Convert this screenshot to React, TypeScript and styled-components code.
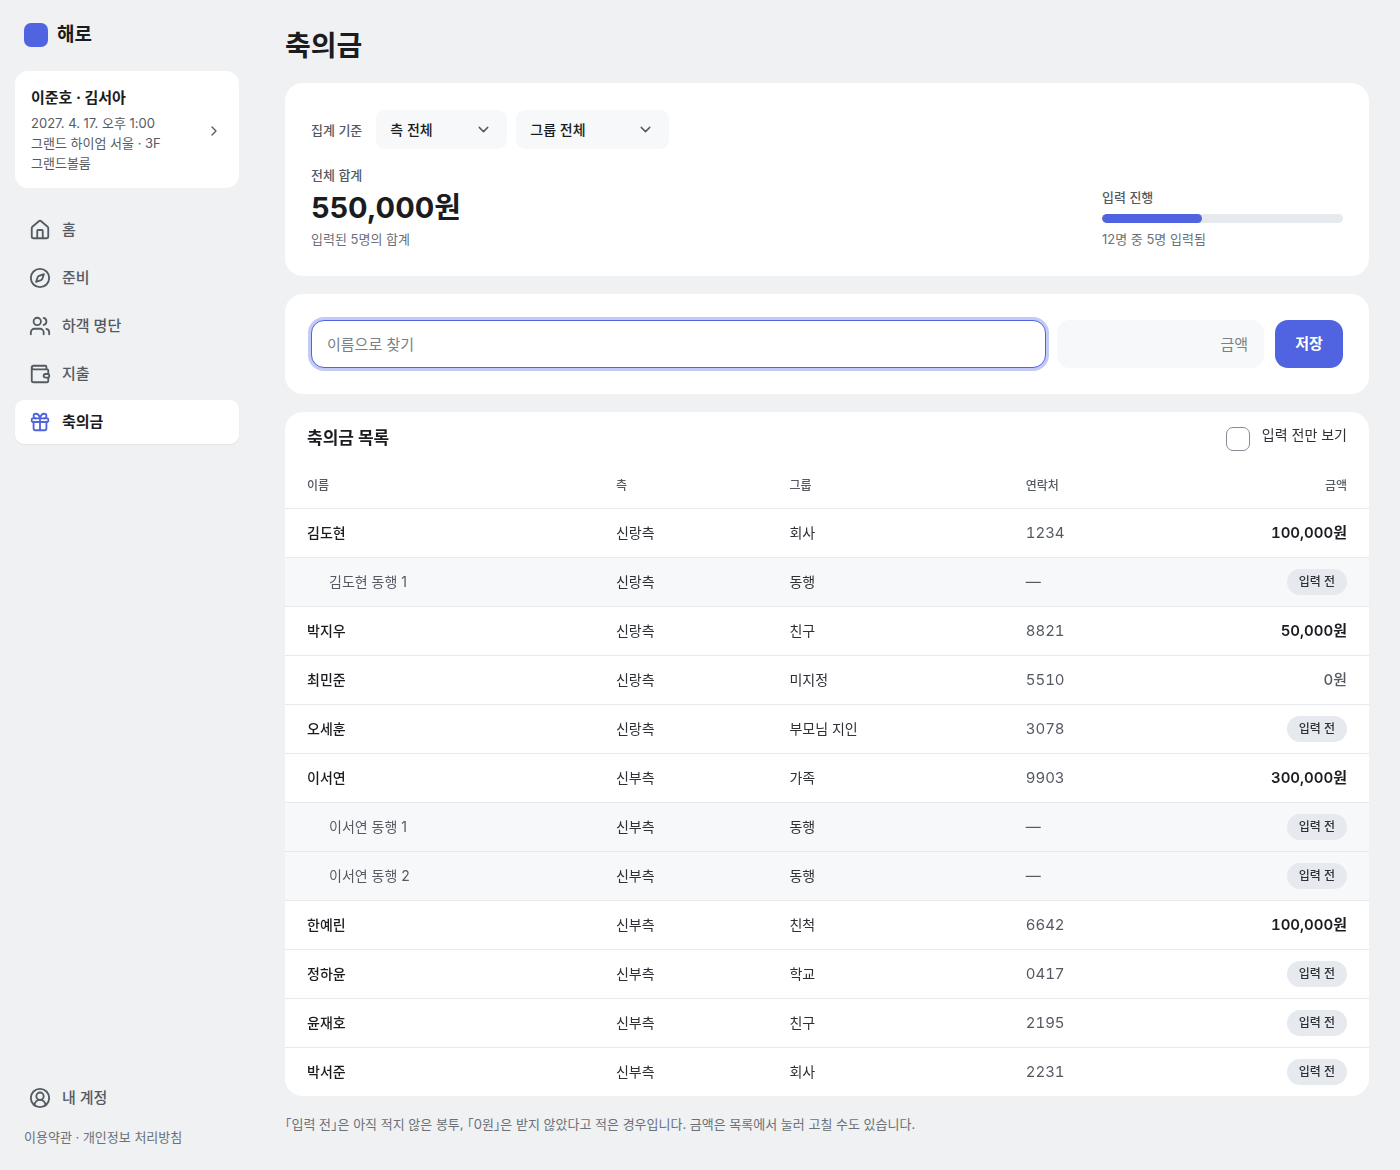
import React, { useState } from "react";
import styled, { createGlobalStyle, css } from "styled-components";
import {
  ChevronDown,
  ChevronRight,
  CircleUserRound,
  Compass,
  Gift,
  House,
  Users,
  Wallet,
} from "lucide-react";

const color = {
  page: "#eff1f3",
  card: "#ffffff",
  soft: "#f7f8fa",
  line: "#e7e9ec",
  chip: "#e6e9ed",
  ink: "#1a1c20",
  body: "#2d3136",
  mid: "#555a62",
  muted: "#6b7078",
  brand: "#5063e0",
};

const GlobalStyle = createGlobalStyle`
  *, *::before, *::after { box-sizing: border-box; }
  body {
    margin: 0;
    background: ${color.page};
    color: ${color.ink};
    font-family: Inter, "Noto Sans CJK KR", sans-serif;
    font-size: 15px;
    line-height: 20px;
    word-break: keep-all;
    -webkit-font-smoothing: antialiased;
  }
  button, input, select { font: inherit; color: inherit; }
  h1, h2, p { margin: 0; }
  a { color: inherit; text-decoration: none; }
`;

const Shell = styled.div`
  display: grid;
  grid-template-columns: 254px minmax(0, 1fr);
  min-height: 100vh;
`;

const Sidebar = styled.aside`
  position: sticky;
  top: 0;
  display: flex;
  flex-direction: column;
  height: 100vh;
  padding: 20px 15px 23px;
`;

const Brand = styled.a`
  display: flex;
  align-items: center;
  gap: 9px;
  height: 30px;
  padding: 0 9px;
  font-size: 19px;
  font-weight: 700;
`;

const BrandMark = styled.span`
  width: 24px;
  height: 24px;
  border-radius: 7px;
  background: ${color.brand};
`;

const EventCard = styled.button`
  display: flex;
  align-items: center;
  justify-content: space-between;
  margin-top: 21px;
  padding: 17px 17px 15px 16px;
  border: 0;
  border-radius: 13px;
  background: ${color.card};
  text-align: left;
  cursor: pointer;

  svg { color: ${color.mid}; }
`;

const EventText = styled.span`
  display: flex;
  flex-direction: column;
  width: 150px;
  font-size: 13px;
  color: ${color.mid};
`;

const Couple = styled.strong`
  margin-bottom: 5px;
  font-size: 15px;
  font-weight: 700;
  color: ${color.ink};
`;

const Nav = styled.nav`
  display: flex;
  flex-direction: column;
  gap: 4px;
  margin-top: 20px;
`;

const NavLink = styled.a<{ $active?: boolean }>`
  display: flex;
  align-items: center;
  gap: 11px;
  height: 44px;
  padding: 0 14px;
  border-radius: 9px;
  font-size: 15px;
  font-weight: 500;
  color: ${color.mid};

  svg { flex: none; }

  ${(p) =>
    p.$active &&
    css`
      background: ${color.card};
      box-shadow: 0 1px 2px rgba(20, 24, 40, 0.06);
      font-weight: 700;
      color: ${color.ink};
      svg { color: ${color.brand}; }
    `}
`;

const SidebarFoot = styled.div`
  display: flex;
  flex-direction: column;
  gap: 7px;
  margin-top: auto;
`;

const Legal = styled.p`
  padding: 0 9px;
  font-size: 13px;
  color: ${color.muted};
`;

const Main = styled.main`
  display: flex;
  flex-direction: column;
  gap: 18px;
  padding: 28px 31px 35px 31px;
`;

const PageTitle = styled.h1`
  font-size: 28px;
  line-height: 37px;
  font-weight: 700;
`;

const Card = styled.section`
  border-radius: 18px;
  background: ${color.card};
`;

const SummaryCard = styled(Card)`
  padding: 27px 26px;
`;

const Filters = styled.div`
  display: flex;
  align-items: center;
  gap: 9px;
`;

const FilterLabel = styled.span`
  margin-right: 5px;
  font-size: 13px;
  font-weight: 500;
  color: ${color.mid};
`;

const SelectBox = styled.span<{ $width: number }>`
  display: grid;
  align-items: center;
  width: ${(p) => p.$width}px;

  > * { grid-area: 1 / 1; }
  svg {
    justify-self: end;
    margin-right: 15px;
    color: ${color.mid};
    pointer-events: none;
  }
`;

const Select = styled.select`
  appearance: none;
  width: 100%;
  height: 39px;
  padding: 0 32px 0 14px;
  border: 0;
  border-radius: 9px;
  background: ${color.soft};
  font-size: 14px;
  font-weight: 500;
  color: ${color.ink};
`;

const Totals = styled.div`
  display: flex;
  align-items: flex-end;
  justify-content: space-between;
  margin-top: 16px;
`;

const SmallLabel = styled.p`
  font-size: 13px;
  font-weight: 500;
  color: ${color.mid};
`;

const SmallNote = styled.p`
  font-size: 13px;
  color: ${color.muted};
`;

const Amount = styled.p`
  margin: 3px 0 1px;
  font-size: 29px;
  line-height: 40px;
  font-weight: 700;
`;

const ProgressBlock = styled.div`
  width: 241px;
`;

const Track = styled.div`
  height: 9px;
  margin: 7px 0 6px;
  border-radius: 5px;
  background: ${color.chip};
  overflow: hidden;
`;

const Fill = styled.div`
  height: 100%;
  border-radius: 5px;
  background: ${color.brand};
`;

const EntryCard = styled(Card)`
  padding: 26px;
`;

const EntryForm = styled.form`
  display: flex;
  gap: 11px;
`;

const Field = styled.input`
  height: 48px;
  min-width: 0;
  padding: 0 15px;
  border: 1px solid transparent;
  border-radius: 13px;
  outline: 0;
  background: ${color.soft};
  font-size: 15px;

  &::placeholder { color: #7b7f87; opacity: 1; }
  &:focus {
    border-color: ${color.brand};
    background: ${color.card};
    box-shadow: 0 0 0 3px #c3caf6;
  }
`;

const NameField = styled(Field)`
  flex: 1;
`;

const MoneyField = styled(Field)`
  width: 207px;
  text-align: right;
`;

const SaveButton = styled.button`
  width: 68px;
  height: 48px;
  border: 0;
  border-radius: 13px;
  background: ${color.brand};
  font-size: 15px;
  font-weight: 700;
  color: #ffffff;
  cursor: pointer;
`;

const ListCard = styled(Card)`
  overflow: hidden;
`;

const ListHead = styled.div`
  display: flex;
  align-items: center;
  justify-content: space-between;
  height: 52px;
  padding: 0 22px;
`;

const ListTitle = styled.h2`
  font-size: 17px;
  line-height: 24px;
  font-weight: 700;
`;

const CheckLabel = styled.label`
  display: flex;
  align-items: flex-end;
  gap: 12px;
  font-size: 14px;
  color: ${color.body};

  span { padding-bottom: 6px; }
`;

const Checkbox = styled.input`
  appearance: none;
  width: 24px;
  height: 24px;
  margin: 0;
  border: 1px solid #868b94;
  border-radius: 7px;
  background: ${color.card};

  &:checked {
    border-color: ${color.brand};
    background: ${color.brand};
  }
`;

const Table = styled.table`
  width: 100%;
  table-layout: fixed;
  border-collapse: separate;
  border-spacing: 0;
`;

const Col = styled.col<{ $share: number }>`
  width: ${(p) => p.$share}%;
`;

const HeadCell = styled.th<{ $end?: boolean }>`
  height: 44px;
  padding: ${(p) => (p.$end ? "0 22px 0 0" : "0 0 0 22px")};
  font-size: 12px;
  font-weight: 500;
  color: ${color.mid};
  text-align: ${(p) => (p.$end ? "right" : "left")};
`;

const Row = styled.tr<{ $sub: boolean }>`
  background: ${(p) => (p.$sub ? color.soft : color.card)};
`;

const Cell = styled.td`
  height: 49px;
  padding: 0 0 0 22px;
  border-top: 1px solid ${color.line};
  font-size: 14px;
  color: ${color.body};
`;

const NameCell = styled(Cell)<{ $sub: boolean }>`
  padding-left: ${(p) => (p.$sub ? 44 : 22)}px;
  font-weight: ${(p) => (p.$sub ? 400 : 500)};
  color: ${(p) => (p.$sub ? color.mid : color.ink)};
`;

const PhoneCell = styled(Cell)`
  font-size: 15px;
  font-variant-numeric: tabular-nums;
  color: ${color.mid};
`;

const MoneyCell = styled(Cell)<{ $zero: boolean }>`
  padding: 0 22px 0 0;
  text-align: right;
  font-size: 15px;
  font-weight: ${(p) => (p.$zero ? 500 : 600)};
  font-variant-numeric: tabular-nums;
  color: ${(p) => (p.$zero ? color.mid : color.ink)};
`;

const Pending = styled.span`
  display: inline-block;
  padding: 3px 12px;
  border-radius: 13px;
  background: ${color.chip};
  font-size: 12px;
  font-weight: 500;
  color: ${color.body};
`;

const FootNote = styled.p`
  font-size: 13px;
  font-feature-settings: "halt";
  color: ${color.muted};
`;

const navItems = [
  { label: "홈", icon: House },
  { label: "준비", icon: Compass },
  { label: "하객 명단", icon: Users },
  { label: "지출", icon: Wallet },
  { label: "축의금", icon: Gift, active: true },
];

type Guest = {
  name: string;
  side: string;
  group: string;
  phone: string;
  amount: number | null;
  sub?: boolean;
};

const guests: Guest[] = [
  { name: "김도현", side: "신랑측", group: "회사", phone: "1234", amount: 100000 },
  { name: "김도현 동행 1", side: "신랑측", group: "동행", phone: "—", amount: null, sub: true },
  { name: "박지우", side: "신랑측", group: "친구", phone: "8821", amount: 50000 },
  { name: "최민준", side: "신랑측", group: "미지정", phone: "5510", amount: 0 },
  { name: "오세훈", side: "신랑측", group: "부모님 지인", phone: "3078", amount: null },
  { name: "이서연", side: "신부측", group: "가족", phone: "9903", amount: 300000 },
  { name: "이서연 동행 1", side: "신부측", group: "동행", phone: "—", amount: null, sub: true },
  { name: "이서연 동행 2", side: "신부측", group: "동행", phone: "—", amount: null, sub: true },
  { name: "한예린", side: "신부측", group: "친척", phone: "6642", amount: 100000 },
  { name: "정하윤", side: "신부측", group: "학교", phone: "0417", amount: null },
  { name: "윤재호", side: "신부측", group: "친구", phone: "2195", amount: null },
  { name: "박서준", side: "신부측", group: "회사", phone: "2231", amount: null },
];

const won = (value: number) => `${value.toLocaleString("en-US")}원`;

export default function App() {
  const [pendingOnly, setPendingOnly] = useState(false);
  const entered = guests.filter((g) => g.amount !== null).length;
  const total = guests.reduce((sum, g) => sum + (g.amount ?? 0), 0);
  const rows = pendingOnly ? guests.filter((g) => g.amount === null) : guests;

  return (
    <>
      <GlobalStyle />
      <Shell>
        <Sidebar>
          <Brand href="#">
            <BrandMark />
            해로
          </Brand>
          <EventCard type="button">
            <EventText>
              <Couple>이준호 · 김서아</Couple>
              <span>2027. 4. 17. 오후 1:00</span>
              <span>그랜드 하이엄 서울 · 3F 그랜드볼룸</span>
            </EventText>
            <ChevronRight size={16} />
          </EventCard>
          <Nav>
            {navItems.map(({ label, icon: Icon, active }) => (
              <NavLink key={label} href="#" $active={active}>
                <Icon size={22} />
                {label}
              </NavLink>
            ))}
          </Nav>
          <SidebarFoot>
            <NavLink href="#">
              <CircleUserRound size={22} />내 계정
            </NavLink>
            <Legal>
              <a href="#">이용약관</a> · <a href="#">개인정보 처리방침</a>
            </Legal>
          </SidebarFoot>
        </Sidebar>

        <Main>
          <PageTitle>축의금</PageTitle>

          <SummaryCard>
            <Filters>
              <FilterLabel>집계 기준</FilterLabel>
              <SelectBox $width={131}>
                <Select aria-label="측">
                  <option>측 전체</option>
                </Select>
                <ChevronDown size={17} />
              </SelectBox>
              <SelectBox $width={153}>
                <Select aria-label="그룹">
                  <option>그룹 전체</option>
                </Select>
                <ChevronDown size={17} />
              </SelectBox>
            </Filters>
            <Totals>
              <div>
                <SmallLabel>전체 합계</SmallLabel>
                <Amount>{won(total)}</Amount>
                <SmallNote>{`입력된 ${entered}명의 합계`}</SmallNote>
              </div>
              <ProgressBlock>
                <SmallLabel>입력 진행</SmallLabel>
                <Track>
                  <Fill style={{ width: `${(entered / guests.length) * 100}%` }} />
                </Track>
                <SmallNote>{`${guests.length}명 중 ${entered}명 입력됨`}</SmallNote>
              </ProgressBlock>
            </Totals>
          </SummaryCard>

          <EntryCard>
            <EntryForm onSubmit={(e) => e.preventDefault()}>
              <NameField autoFocus aria-label="이름" placeholder="이름으로 찾기" />
              <MoneyField aria-label="금액" placeholder="금액" inputMode="numeric" />
              <SaveButton type="submit">저장</SaveButton>
            </EntryForm>
          </EntryCard>

          <ListCard>
            <ListHead>
              <ListTitle>축의금 목록</ListTitle>
              <CheckLabel>
                <Checkbox
                  type="checkbox"
                  checked={pendingOnly}
                  onChange={(e) => setPendingOnly(e.target.checked)}
                />
                <span>입력 전만 보기</span>
              </CheckLabel>
            </ListHead>
            <Table>
              <colgroup>
                <Col $share={28.5} />
                <Col $share={16} />
                <Col $share={21.8} />
                <Col $share={16.7} />
                <Col $share={17} />
              </colgroup>
              <thead>
                <tr>
                  <HeadCell>이름</HeadCell>
                  <HeadCell>측</HeadCell>
                  <HeadCell>그룹</HeadCell>
                  <HeadCell>연락처</HeadCell>
                  <HeadCell $end>금액</HeadCell>
                </tr>
              </thead>
              <tbody>
                {rows.map((g) => (
                  <Row key={g.name} $sub={!!g.sub}>
                    <NameCell $sub={!!g.sub}>{g.name}</NameCell>
                    <Cell>{g.side}</Cell>
                    <Cell>{g.group}</Cell>
                    <PhoneCell>{g.phone}</PhoneCell>
                    <MoneyCell $zero={g.amount === 0}>
                      {g.amount === null ? <Pending>입력 전</Pending> : won(g.amount)}
                    </MoneyCell>
                  </Row>
                ))}
              </tbody>
            </Table>
          </ListCard>

          <FootNote>
            「입력 전」은 아직 적지 않은 봉투, 「0원」은 받지 않았다고 적은 경우입니다. 금액은 목록에서 눌러 고칠 수도 있습니다.
          </FootNote>
        </Main>
      </Shell>
    </>
  );
}
